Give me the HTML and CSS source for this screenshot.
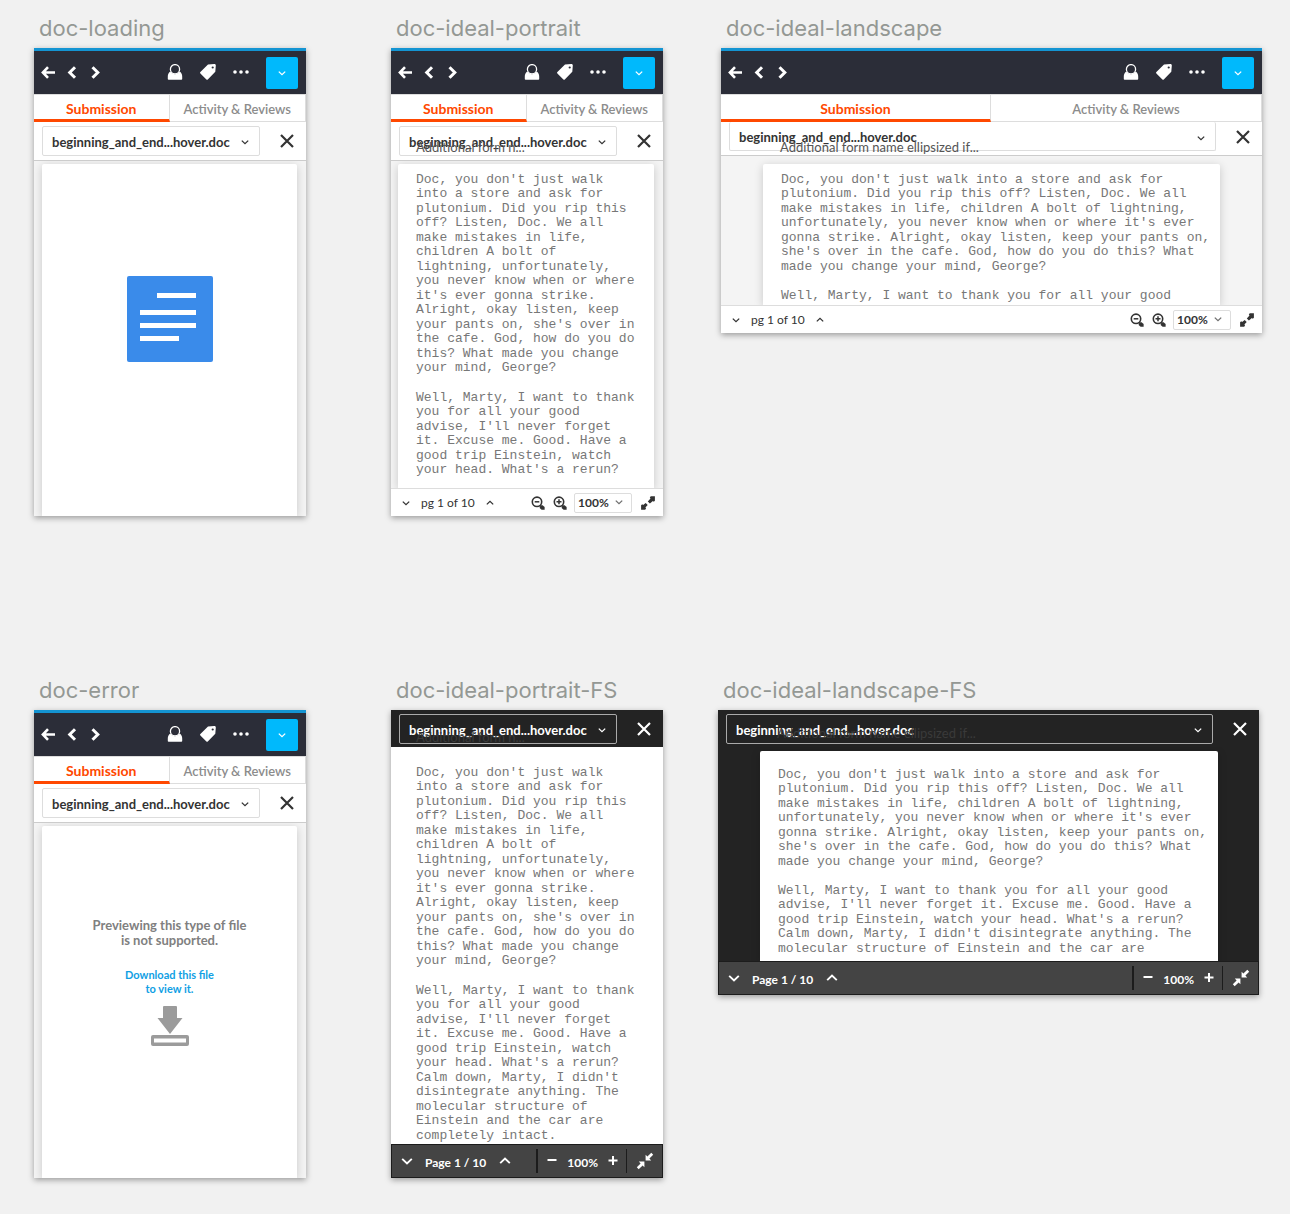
FILE: index.html
```html
<!DOCTYPE html>
<html lang="en">
<head>
<meta charset="utf-8">
<title>Document viewer states</title>
<link rel="stylesheet" href="styles.css">
</head>
<body>
<svg class="sprite" aria-hidden="true">
  <symbol id="i-back" viewBox="0 0 14 14"><path d="M7 1.2 1.900 6.500 7 11.800M2.500 6.500H14" fill="none" stroke="currentColor" stroke-width="2.600"/></symbol>
  <symbol id="i-left" viewBox="0 0 14 14"><path d="M10 1.200 4.700 6.500l5.300 5.300" fill="none" stroke="currentColor" stroke-width="3"/></symbol>
  <symbol id="i-right" viewBox="0 0 14 14"><path d="M3.500 1.200 8.800 6.500l-5.300 5.300" fill="none" stroke="currentColor" stroke-width="3"/></symbol>
  <symbol id="i-user" viewBox="0 0 16 16"><circle cx="8" cy="5.200" r="4.600" fill="none" stroke="currentColor" stroke-width="1.300"/><path d="M3.200 7.600C1.600 8.800.8 10.600.8 12.600V15a.8.8 0 0 0 .8.800h12.800a.8.8 0 0 0 .8-.8V12.600c0-2-.8-3.800-2.400-5C11.800 9.200 10.100 10.200 8 10.200S4.200 9.200 3.200 7.600z" fill="currentColor"/></symbol>
  <symbol id="i-tag" viewBox="0 0 16 16"><path fill="currentColor" fill-rule="evenodd" d="M8 .6 14.200.1c1.100-.1 1.700.6 1.600 1.700l-.5 6-7.500 7.600a1 1 0 0 1-1.400 0L.4 9.400a1 1 0 0 1 0-1.400zM12.700 2.400a1.100 1.100 0 1 0 .01 2.200 1.100 1.100 0 0 0 0-2.200z"/></symbol>
  <symbol id="i-dots" viewBox="0 0 16 16"><path fill="currentColor" d="M2 6.200a1.800 1.800 0 1 1 0 3.600 1.800 1.800 0 0 1 0-3.600zm6 0a1.800 1.800 0 1 1 0 3.600 1.800 1.800 0 0 1 0-3.600zm6 0a1.800 1.800 0 1 1 0 3.600 1.800 1.800 0 0 1 0-3.600z"/></symbol>
  <symbol id="i-down" viewBox="0 0 8 8"><path d="M.8 2.600 4 5.600l3.200-3" fill="none" stroke="currentColor" stroke-width="1.300"/></symbol>
  <symbol id="i-up" viewBox="0 0 8 8"><path d="M.8 5.400 4 2.400l3.200 3" fill="none" stroke="currentColor" stroke-width="1.300"/></symbol>
  <symbol id="i-close" viewBox="0 0 14 14"><path d="M1 1l12 12M13 1 1 13" fill="none" stroke="currentColor" stroke-width="2.200"/></symbol>
  <symbol id="i-out" viewBox="0 0 14 14"><circle cx="6" cy="5.800" r="4.700" fill="none" stroke="currentColor" stroke-width="1.600"/><path d="M3.700 5.800h4.600" stroke="currentColor" stroke-width="1.500"/><path d="M9.400 9.200h2.200l2 1.800v2.800h-3L8.600 12z" fill="currentColor"/></symbol>
  <symbol id="i-in" viewBox="0 0 14 14"><circle cx="6" cy="5.800" r="4.700" fill="none" stroke="currentColor" stroke-width="1.600"/><path d="M3.500 5.800h5M6 3.300v5" stroke="currentColor" stroke-width="1.500"/><path d="M9.400 9.200h2.200l2 1.800v2.800h-3L8.600 12z" fill="currentColor"/></symbol>
  <symbol id="i-expand" viewBox="0 0 14 14"><path fill="currentColor" d="M13.900.2v4.600l-1.100.9-.9-.8-3 2.600-2.100-2.100 2.700-2.900-.7-.8L9.700.200zM.1 13.800V9.200l1.100-.9.900.8 2.600-2.200 2 2.100-2.300 2.500.7.800-.9 1.500z"/></symbol>
  <symbol id="i-compress" viewBox="0 0 18 18"><path fill="currentColor" d="M9.600 8.400V2.800l1.800 1.800L15.300.8l1.900 1.900-3.800 3.800 1.800 1.900zM8.400 9.600v5.600l-1.800-1.800-3.900 3.800L.8 15.300l3.800-3.800-1.800-1.900z"/></symbol>
  <symbol id="i-minus" viewBox="0 0 10 10"><path d="M.5 4h9" stroke="currentColor" stroke-width="2"/></symbol>
  <symbol id="i-plus" viewBox="0 0 10 10"><path d="M.5 4.500h9M5 0v9" stroke="currentColor" stroke-width="2"/></symbol>
  <symbol id="i-doc" viewBox="0 0 86 86"><rect width="86" height="86" rx="2" fill="#3a8bea"/><path fill="#fff" d="M30 17h39v5H30zM13 34h56v5H13zM13 47h56v5H13zM13 60h39v5H13z"/></symbol>
  <symbol id="i-download" viewBox="0 0 38 40"><path fill="#9b9b9b" d="M13 0h12a1 1 0 0 1 1 1v11h5.500L19 28 6.500 12H12V1a1 1 0 0 1 1-1z"/><path fill="#9b9b9b" fill-rule="evenodd" d="M2 29h34a2 2 0 0 1 2 2v7a2 2 0 0 1-2 2H2a2 2 0 0 1-2-2v-7a2 2 0 0 1 2-2zm1 3.500v4h32v-4z"/></symbol>
</svg>

<main>
<div class="row">
  <section class="board">
    <h2>doc-loading</h2>
    <div class="frame">
      <header class="nav">
        <button aria-label="Back"><svg><use href="#i-back"/></svg></button><button aria-label="Previous"><svg><use href="#i-left"/></svg></button><button aria-label="Next"><svg><use href="#i-right"/></svg></button>
        <span class="fill"></span>
        <button class="wide" aria-label="Profile"><svg><use href="#i-user"/></svg></button><button class="wide" aria-label="Tags"><svg><use href="#i-tag"/></svg></button><button class="wide" aria-label="More"><svg><use href="#i-dots"/></svg></button><button class="menu" aria-label="Open menu"><svg><use href="#i-down"/></svg></button>
      </header>
      <nav class="tabs"><a class="active" href="#submission">Submission</a><a href="#activity">Activity &amp; Reviews</a></nav>
      <div class="docbar">
        <div class="picker"><select aria-label="Document"><option>beginning_and_end...hover.doc</option></select><svg><use href="#i-down"/></svg></div>
        <button class="close" aria-label="Close"><svg><use href="#i-close"/></svg></button>
      </div>
      <div class="viewer full">
        <div class="page loading"><svg class="doc-icon" role="img" aria-label="Document loading"><use href="#i-doc"/></svg></div>
      </div>
    </div>
  </section>

  <section class="board">
    <h2>doc-ideal-portrait</h2>
    <div class="frame">
      <header class="nav">
        <button aria-label="Back"><svg><use href="#i-back"/></svg></button><button aria-label="Previous"><svg><use href="#i-left"/></svg></button><button aria-label="Next"><svg><use href="#i-right"/></svg></button>
        <span class="fill"></span>
        <button class="wide" aria-label="Profile"><svg><use href="#i-user"/></svg></button><button class="wide" aria-label="Tags"><svg><use href="#i-tag"/></svg></button><button class="wide" aria-label="More"><svg><use href="#i-dots"/></svg></button><button class="menu" aria-label="Open menu"><svg><use href="#i-down"/></svg></button>
      </header>
      <nav class="tabs"><a class="active" href="#submission">Submission</a><a href="#activity">Activity &amp; Reviews</a></nav>
      <div class="docbar">
        <div class="picker"><select aria-label="Document"><option>beginning_and_end...hover.doc</option></select><svg><use href="#i-down"/></svg></div>
        <button class="close" aria-label="Close"><svg><use href="#i-close"/></svg></button>
        <span class="form-name">Additional form n...</span>
      </div>
      <div class="viewer">
        <div class="page">
          <p><span>Doc, you don't just walk</span><span>into a store and ask for</span><span>plutonium. Did you rip this</span><span>off? Listen, Doc. We all</span><span>make mistakes in life,</span><span>children A bolt of</span><span>lightning, unfortunately,</span><span>you never know when or where</span><span>it's ever gonna strike.</span><span>Alright, okay listen, keep</span><span>your pants on, she's over in</span><span>the cafe. God, how do you do</span><span>this? What made you change</span><span>your mind, George?</span></p>
          <p><span>Well, Marty, I want to thank</span><span>you for all your good</span><span>advise, I'll never forget</span><span>it. Excuse me. Good. Have a</span><span>good trip Einstein, watch</span><span>your head. What's a rerun?</span></p>
        </div>
      </div>
      <footer class="tools">
        <button aria-label="Next page"><svg><use href="#i-down"/></svg></button><span class="count">pg 1 of 10</span><button aria-label="Previous page"><svg><use href="#i-up"/></svg></button>
        <span class="fill"></span>
        <button class="icon" aria-label="Zoom out"><svg><use href="#i-out"/></svg></button><button class="icon" aria-label="Zoom in"><svg><use href="#i-in"/></svg></button>
        <div class="zoom"><select aria-label="Zoom"><option>100%</option></select><svg><use href="#i-down"/></svg></div>
        <button class="icon size" aria-label="Full screen"><svg><use href="#i-expand"/></svg></button>
      </footer>
    </div>
  </section>

  <section class="board landscape">
    <h2>doc-ideal-landscape</h2>
    <div class="frame">
      <header class="nav">
        <button aria-label="Back"><svg><use href="#i-back"/></svg></button><button aria-label="Previous"><svg><use href="#i-left"/></svg></button><button aria-label="Next"><svg><use href="#i-right"/></svg></button>
        <span class="fill"></span>
        <button class="wide" aria-label="Profile"><svg><use href="#i-user"/></svg></button><button class="wide" aria-label="Tags"><svg><use href="#i-tag"/></svg></button><button class="wide" aria-label="More"><svg><use href="#i-dots"/></svg></button><button class="menu" aria-label="Open menu"><svg><use href="#i-down"/></svg></button>
      </header>
      <nav class="tabs"><a class="active" href="#submission">Submission</a><a href="#activity">Activity &amp; Reviews</a></nav>
      <div class="docbar">
        <div class="picker"><select aria-label="Document"><option>beginning_and_end...hover.doc</option></select><svg><use href="#i-down"/></svg></div>
        <button class="close" aria-label="Close"><svg><use href="#i-close"/></svg></button>
        <span class="form-name">Additional form name ellipsized if...</span>
      </div>
      <div class="viewer">
        <div class="page">
          <p><span>Doc, you don't just walk into a store and ask for</span><span>plutonium. Did you rip this off? Listen, Doc. We all</span><span>make mistakes in life, children A bolt of lightning,</span><span>unfortunately, you never know when or where it's ever</span><span>gonna strike. Alright, okay listen, keep your pants on,</span><span>she's over in the cafe. God, how do you do this? What</span><span>made you change your mind, George?</span></p>
          <p><span>Well, Marty, I want to thank you for all your good</span></p>
        </div>
      </div>
      <footer class="tools">
        <button aria-label="Next page"><svg><use href="#i-down"/></svg></button><span class="count">pg 1 of 10</span><button aria-label="Previous page"><svg><use href="#i-up"/></svg></button>
        <span class="fill"></span>
        <button class="icon" aria-label="Zoom out"><svg><use href="#i-out"/></svg></button><button class="icon" aria-label="Zoom in"><svg><use href="#i-in"/></svg></button>
        <div class="zoom"><select aria-label="Zoom"><option>100%</option></select><svg><use href="#i-down"/></svg></div>
        <button class="icon size" aria-label="Full screen"><svg><use href="#i-expand"/></svg></button>
      </footer>
    </div>
  </section>
</div>

<div class="row row-fs">
  <section class="board">
    <h2>doc-error</h2>
    <div class="frame">
      <header class="nav">
        <button aria-label="Back"><svg><use href="#i-back"/></svg></button><button aria-label="Previous"><svg><use href="#i-left"/></svg></button><button aria-label="Next"><svg><use href="#i-right"/></svg></button>
        <span class="fill"></span>
        <button class="wide" aria-label="Profile"><svg><use href="#i-user"/></svg></button><button class="wide" aria-label="Tags"><svg><use href="#i-tag"/></svg></button><button class="wide" aria-label="More"><svg><use href="#i-dots"/></svg></button><button class="menu" aria-label="Open menu"><svg><use href="#i-down"/></svg></button>
      </header>
      <nav class="tabs"><a class="active" href="#submission">Submission</a><a href="#activity">Activity &amp; Reviews</a></nav>
      <div class="docbar">
        <div class="picker"><select aria-label="Document"><option>beginning_and_end...hover.doc</option></select><svg><use href="#i-down"/></svg></div>
        <button class="close" aria-label="Close"><svg><use href="#i-close"/></svg></button>
      </div>
      <div class="viewer full">
        <div class="page error">
          <p class="message">Previewing this type of file<br>is not supported.</p>
          <a class="download" href="#download">Download this file<br>to view it.<svg><use href="#i-download"/></svg></a>
        </div>
      </div>
    </div>
  </section>

  <section class="board fs">
    <h2>doc-ideal-portrait-FS</h2>
    <div class="frame">
      <div class="docbar">
        <div class="picker"><select aria-label="Document"><option>beginning_and_end...hover.doc</option></select><svg><use href="#i-down"/></svg></div>
        <button class="close" aria-label="Close"><svg><use href="#i-close"/></svg></button>
        <span class="form-name">Additional form n...</span>
      </div>
      <div class="viewer">
        <div class="page">
          <p><span>Doc, you don't just walk</span><span>into a store and ask for</span><span>plutonium. Did you rip this</span><span>off? Listen, Doc. We all</span><span>make mistakes in life,</span><span>children A bolt of</span><span>lightning, unfortunately,</span><span>you never know when or where</span><span>it's ever gonna strike.</span><span>Alright, okay listen, keep</span><span>your pants on, she's over in</span><span>the cafe. God, how do you do</span><span>this? What made you change</span><span>your mind, George?</span></p>
          <p><span>Well, Marty, I want to thank</span><span>you for all your good</span><span>advise, I'll never forget</span><span>it. Excuse me. Good. Have a</span><span>good trip Einstein, watch</span><span>your head. What's a rerun?</span><span>Calm down, Marty, I didn't</span><span>disintegrate anything. The</span><span>molecular structure of</span><span>Einstein and the car are</span><span>completely intact.</span></p>
        </div>
      </div>
      <footer class="tools">
        <button aria-label="Next page"><svg><use href="#i-down"/></svg></button><span class="count">Page 1 / 10</span><button aria-label="Previous page"><svg><use href="#i-up"/></svg></button>
        <span class="fill"></span>
        <div class="stepper"><button aria-label="Zoom out"><svg><use href="#i-minus"/></svg></button><span>100%</span><button aria-label="Zoom in"><svg><use href="#i-plus"/></svg></button></div>
        <button class="exit" aria-label="Exit full screen"><svg><use href="#i-compress"/></svg></button>
      </footer>
    </div>
  </section>

  <section class="board fs landscape">
    <h2>doc-ideal-landscape-FS</h2>
    <div class="frame">
      <div class="docbar">
        <div class="picker"><select aria-label="Document"><option>beginning_and_end...hover.doc</option></select><svg><use href="#i-down"/></svg></div>
        <button class="close" aria-label="Close"><svg><use href="#i-close"/></svg></button>
        <span class="form-name">Additional form name ellipsized if...</span>
      </div>
      <div class="viewer">
        <div class="page">
          <p><span>Doc, you don't just walk into a store and ask for</span><span>plutonium. Did you rip this off? Listen, Doc. We all</span><span>make mistakes in life, children A bolt of lightning,</span><span>unfortunately, you never know when or where it's ever</span><span>gonna strike. Alright, okay listen, keep your pants on,</span><span>she's over in the cafe. God, how do you do this? What</span><span>made you change your mind, George?</span></p>
          <p><span>Well, Marty, I want to thank you for all your good</span><span>advise, I'll never forget it. Excuse me. Good. Have a</span><span>good trip Einstein, watch your head. What's a rerun?</span><span>Calm down, Marty, I didn't disintegrate anything. The</span><span>molecular structure of Einstein and the car are</span></p>
        </div>
      </div>
      <footer class="tools">
        <button aria-label="Next page"><svg><use href="#i-down"/></svg></button><span class="count">Page 1 / 10</span><button aria-label="Previous page"><svg><use href="#i-up"/></svg></button>
        <span class="fill"></span>
        <div class="stepper"><button aria-label="Zoom out"><svg><use href="#i-minus"/></svg></button><span>100%</span><button aria-label="Zoom in"><svg><use href="#i-plus"/></svg></button></div>
        <button class="exit" aria-label="Exit full screen"><svg><use href="#i-compress"/></svg></button>
      </footer>
    </div>
  </section>
</div>
</main>
</body>
</html>
```
FILE: styles.css
```css
* { box-sizing: border-box; }

body {
  margin: 0;
  background: #f1f1f1;
  color: #333;
  font-family: Lato, "Liberation Sans", sans-serif;
  font-size: 13px;
}

button {
  display: flex;
  align-items: center;
  justify-content: center;
  padding: 0;
  border: 0;
  background: none;
  color: inherit;
  cursor: pointer;
}

select {
  width: 100%;
  height: 100%;
  margin: 0;
  padding: 0 8px;
  border: 1px solid #ddd;
  border-radius: 2px;
  background: none;
  color: inherit;
  font: inherit;
  appearance: none;
}

.sprite { position: absolute; width: 0; height: 0; }
.fill { flex: 1; }

/* Artboard grid */
.row {
  display: grid;
  grid-template-columns: 272fr 85fr 272fr 58fr 541fr;
  align-items: start;
  padding: 14px 28px 0 34px;
}
.row-fs {
  grid-template-columns: 272fr 85fr 272fr 55fr 541fr;
  padding: 160px 31px 36px 34px;
}
.board:nth-child(1) { grid-column: 1; }
.board:nth-child(2) { grid-column: 3; }
.board:nth-child(3) { grid-column: 5; }

h2 {
  margin: 0 0 6px;
  padding-left: 5px;
  color: #949894;
  font: 400 22px/28px Inter, sans-serif;
  white-space: nowrap;
}

.frame {
  position: relative;
  background: #fff;
  box-shadow: 0 2px 6px rgba(0, 0, 0, .36);
}

/* Top navigation */
.nav {
  display: flex;
  align-items: center;
  height: 46px;
  padding: 0 8px 0 2px;
  border-top: 3px solid #1494d2;
  background: #2b2d38;
  color: #fff;
}
.nav button { width: 24px; height: 32px; }
.nav svg { width: 14px; height: 14px; }
.nav .wide { width: 33px; padding-bottom: 2px; }
.nav .wide svg { width: 16px; height: 16px; }
.nav .menu {
  width: 32px;
  margin-left: 9px;
  border-radius: 2px;
  background: #00b9fc;
}
.nav .menu svg { width: 8px; height: 8px; }

.tabs {
  display: grid;
  grid-template-columns: 1fr 1fr;
  height: 28px;
  border: 1px solid #ddd;
  border-width: 1px 1px 0 0;
}
.tabs a {
  display: flex;
  align-items: center;
  justify-content: center;
  padding-top: 2px;
  border-bottom: 1px solid #ddd;
  color: #8c8c8c;
  font-weight: 600;
  text-decoration: none;
}
.tabs .active {
  border-right: 1px solid #ddd;
  border-bottom: 3px solid #ff4800;
  color: #ff4800;
  font-size: 14px;
  font-weight: 700;
}

/* Document picker */
.docbar {
  position: relative;
  display: flex;
  align-items: center;
  justify-content: space-between;
  height: 39px;
  padding: 0 6px 0 8px;
  border-bottom: 1px solid #ccc;
}
.picker {
  position: relative;
  width: 218px;
  height: 30px;
  font-weight: 700;
}
.picker select { padding: 2px 9px 0; }
.picker svg {
  position: absolute;
  top: 12px;
  right: 11px;
  width: 8px;
  height: 8px;
  pointer-events: none;
}
.close { width: 26px; height: 26px; }
.close svg { width: 14px; height: 14px; }
.form-name {
  position: absolute;
  top: 16px;
  left: 25px;
  color: #555;
  line-height: 18px;
  white-space: nowrap;
}

.landscape .form-name { left: 59px; }
.landscape .picker { flex: 1; margin-right: 14px; }
.landscape:not(.fs) .docbar { height: 34px; padding-bottom: 4px; }
.landscape:not(.fs) .picker { height: 29px; }
.landscape:not(.fs) .picker select { border-top: 0; }

/* Viewer */
.viewer {
  height: 327px;
  padding: 3px 9px 0 7px;
  overflow: hidden;
  background: #f4f4f4;
}
.viewer.full { height: 355px; padding-left: 8px; }
.landscape .viewer { height: 149px; padding: 8px 42px 0; }
.page {
  height: 100%;
  padding: 8px 0 0 18px;
  border-radius: 2px 2px 0 0;
  background: #fff;
  box-shadow: 0 2px 10px rgba(0, 0, 0, .18);
}
.page p { margin: 0 0 15px; }
.landscape .page p { margin-bottom: 14px; }
.page p span {
  display: block;
  color: #777;
  font: 13px/15px "Liberation Mono", monospace;
  white-space: nowrap;
}
.page p span:nth-child(even) { line-height: 14px; }

.page.loading {
  display: flex;
  justify-content: center;
  padding: 112px 0 0;
}
.doc-icon { width: 86px; height: 86px; }

.page.error {
  padding: 92px 0 0;
  text-align: center;
}
.page .message {
  margin-bottom: 20px;
  color: #808080;
  font-weight: 700;
  line-height: 15px;
}
.download {
  display: block;
  color: #0fa0e4;
  font-size: 11px;
  font-weight: 700;
  line-height: 14px;
  text-decoration: none;
}
.download svg {
  display: block;
  width: 38px;
  height: 40px;
  margin: 10px auto 0;
}

/* Bottom toolbar */
.tools {
  display: flex;
  align-items: center;
  height: 28px;
  padding: 0 4px 0 3px;
  border-top: 1px solid #ddd;
}
.tools button { width: 24px; height: 24px; }
.tools svg { width: 8px; height: 8px; }
.tools .count { padding: 0 3px; font-size: 12px; }
.tools .icon { width: 22px; }
.tools .icon svg { width: 14px; height: 14px; }
.zoom {
  position: relative;
  width: 58px;
  height: 20px;
  margin: 0 5px 0 3px;
  font-size: 12px;
  font-weight: 700;
}
.zoom select { padding: 0 3px; }
.zoom svg { position: absolute; top: 5px; right: 9px; opacity: .7; pointer-events: none; }

/* Full screen */
.fs .docbar {
  height: 37px;
  border: 0;
  background: #232323;
  color: #fff;
}
.fs .picker select { border-color: #aaa; }
.fs .form-name { top: 18px; color: #3a3a3a; }
.fs .viewer { height: 397px; padding: 0; background: #232323; }
.fs .page { padding: 18px 0 0 25px; border-radius: 0; }
.fs.landscape .form-name { top: 14px; }
.fs.landscape .viewer { height: 214px; padding: 4px 41px 0 42px; }
.fs.landscape .page { padding: 16px 0 0 18px; border-radius: 2px 2px 0 0; }
.fs .tools {
  height: 34px;
  padding: 0;
  border: 1px solid #1c1c1c;
  background: #444;
  color: #fff;
  font-size: 12px;
  font-weight: 700;
}
.fs .tools button { width: 30px; }
.fs .tools button svg { width: 12px; height: 12px; }
.fs .tools .count { padding: 2px 4px 0 3px; }
.stepper {
  display: flex;
  align-items: center;
  height: 24px;
  border: solid #1c1c1c;
  border-width: 0 1px 0 2px;
}
.stepper span { padding: 2px 1px 0 2px; }
.fs .tools .stepper button { width: 27px; }
.fs .tools .stepper svg { width: 10px; height: 10px; }
.fs .tools .exit { width: 35px; }
.fs .tools .exit svg { width: 18px; height: 18px; }
```
